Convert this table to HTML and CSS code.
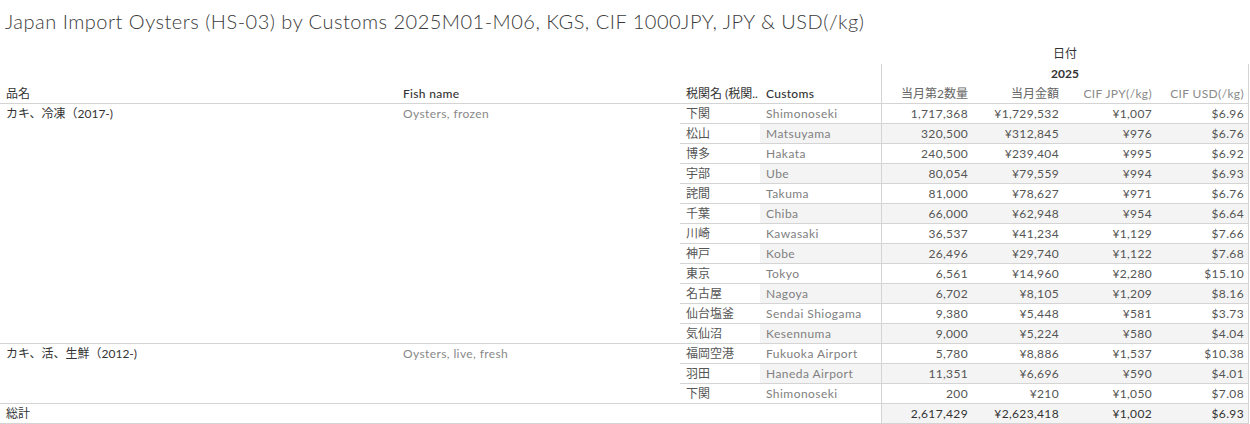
FILE: index.html
```html
<!DOCTYPE html>
<html lang="ja">
<head>
<meta charset="utf-8">
<title>Japan Import Oysters</title>
<link rel="stylesheet" href="styles.css">
</head>
<body>
<div class="title">Japan Import Oysters (HS-03) by Customs 2025M01-M06, KGS, CIF 1000JPY, JPY &amp; USD(/kg)</div>
<div class="grid">
  <div class="blank s4"></div>
  <div class="top s4n">日付</div>
  <div class="blank s4"></div>
  <div class="top year s4n vl vr">2025</div>

  <div class="h dark">品名</div>
  <div class="h dark med">Fish name</div>
  <div class="h dark">税関名 (税関..</div>
  <div class="h dark med">Customs</div>
  <div class="h num mid vl">当月第2数量</div>
  <div class="h num mid">当月金額</div>
  <div class="h num light">CIF JPY(/kg)</div>
  <div class="h num light vr">CIF USD(/kg)</div>

  <div class="g dark r12">カキ、冷凍（2017-)</div>
  <div class="g fish r12">Oysters, frozen</div>
  <div class="c ja">下関</div><div class="c en">Shimonoseki</div><div class="c num vl">1,717,368</div><div class="c num">¥1,729,532</div><div class="c num">¥1,007</div><div class="c num vr">$6.96</div>
  <div class="c ja">松山</div><div class="c en b">Matsuyama</div><div class="c num vl b">320,500</div><div class="c num b">¥312,845</div><div class="c num b">¥976</div><div class="c num vr b">$6.76</div>
  <div class="c ja">博多</div><div class="c en">Hakata</div><div class="c num vl">240,500</div><div class="c num">¥239,404</div><div class="c num">¥995</div><div class="c num vr">$6.92</div>
  <div class="c ja">宇部</div><div class="c en b">Ube</div><div class="c num vl b">80,054</div><div class="c num b">¥79,559</div><div class="c num b">¥994</div><div class="c num vr b">$6.93</div>
  <div class="c ja">詫間</div><div class="c en">Takuma</div><div class="c num vl">81,000</div><div class="c num">¥78,627</div><div class="c num">¥971</div><div class="c num vr">$6.76</div>
  <div class="c ja">千葉</div><div class="c en b">Chiba</div><div class="c num vl b">66,000</div><div class="c num b">¥62,948</div><div class="c num b">¥954</div><div class="c num vr b">$6.64</div>
  <div class="c ja">川崎</div><div class="c en">Kawasaki</div><div class="c num vl">36,537</div><div class="c num">¥41,234</div><div class="c num">¥1,129</div><div class="c num vr">$7.66</div>
  <div class="c ja">神戸</div><div class="c en b">Kobe</div><div class="c num vl b">26,496</div><div class="c num b">¥29,740</div><div class="c num b">¥1,122</div><div class="c num vr b">$7.68</div>
  <div class="c ja">東京</div><div class="c en">Tokyo</div><div class="c num vl">6,561</div><div class="c num">¥14,960</div><div class="c num">¥2,280</div><div class="c num vr">$15.10</div>
  <div class="c ja">名古屋</div><div class="c en b">Nagoya</div><div class="c num vl b">6,702</div><div class="c num b">¥8,105</div><div class="c num b">¥1,209</div><div class="c num vr b">$8.16</div>
  <div class="c ja">仙台塩釜</div><div class="c en">Sendai Shiogama</div><div class="c num vl">9,380</div><div class="c num">¥5,448</div><div class="c num">¥581</div><div class="c num vr">$3.73</div>
  <div class="c ja">気仙沼</div><div class="c en b">Kesennuma</div><div class="c num vl b">9,000</div><div class="c num b">¥5,224</div><div class="c num b">¥580</div><div class="c num vr b">$4.04</div>

  <div class="g dark r3">カキ、活、生鮮（2012-)</div>
  <div class="g fish r3">Oysters, live, fresh</div>
  <div class="c ja">福岡空港</div><div class="c en">Fukuoka Airport</div><div class="c num vl">5,780</div><div class="c num">¥8,886</div><div class="c num">¥1,537</div><div class="c num vr">$10.38</div>
  <div class="c ja">羽田</div><div class="c en b">Haneda Airport</div><div class="c num vl b">11,351</div><div class="c num b">¥6,696</div><div class="c num b">¥590</div><div class="c num vr b">$4.01</div>
  <div class="c ja">下関</div><div class="c en">Shimonoseki</div><div class="c num vl">200</div><div class="c num">¥210</div><div class="c num">¥1,050</div><div class="c num vr">$7.08</div>

  <div class="c dark s4">総計</div>
  <div class="c num tot vl b">2,617,429</div><div class="c num tot b">¥2,623,418</div><div class="c num tot b">¥1,002</div><div class="c num tot vr b">$6.93</div>
</div>
</body>
</html>
```

FILE: styles.css
```css
html, body {
  margin: 0;
  padding: 0;
  background: #ffffff;
}
body {
  width: 1250px;
  height: 424px;
  overflow: hidden;
  font-family: "Lato", "Noto Sans CJK JP", sans-serif;
}
.title {
  height: 44px;
  box-sizing: border-box;
  padding: 8px 0 0 5px;
  font-size: 20px;
  font-weight: 300;
  letter-spacing: 0.5px;
  color: #3a3a3a;
  white-space: nowrap;
  line-height: 26px;
}
.grid {
  display: grid;
  grid-template-columns: 397px 283px 80px 121px 91px 91px 93px 93px;
  grid-auto-rows: 20px;
  font-size: 12px;
}
.grid > div {
  box-sizing: border-box;
  padding: 0 6px;
  line-height: 19px;
  white-space: nowrap;
  overflow: hidden;
}
.s4 { grid-column: span 4; }
.s4n { grid-column: span 4; }
.r12 { grid-row: span 12; }
.r3 { grid-row: span 3; }
.top {
  text-align: center;
  color: #333333;
  line-height: 20px;
}
.year { font-weight: 700; }
.h { border-bottom: 1px solid #d4d4d4; }
.c { border-bottom: 1px solid #d4d4d4; }
.g { border-bottom: 1px solid #d4d4d4; }
.dark { color: #333333; }
.med { font-weight: 500; letter-spacing: 0.3px; }
.fish { color: #888888; letter-spacing: 0.4px; }
.ja { color: #555555; }
.en { color: #808080; letter-spacing: 0.45px; }
.num {
  text-align: right;
  padding-right: 4px !important;
  color: #555555;
  letter-spacing: 0.35px;
}
.mid { color: #666666; letter-spacing: 0; }
.light { color: #8a8a8a; }
.b { background: #f4f4f4; }
.tot { color: #333333; }
.vl { border-left: 1px solid #d4d4d4; }
.vr { border-right: 1px solid #d4d4d4; }
```
